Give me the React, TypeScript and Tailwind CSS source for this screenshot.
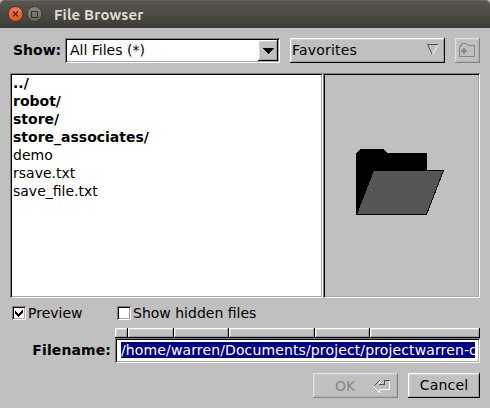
import type { ReactNode } from "react";

const sunken =
  "shadow-[inset_1px_1px_0_#808080,inset_-1px_-1px_0_#fff,inset_2px_2px_0_#000,inset_-2px_-2px_0_#a8a8a8]";
const raised =
  "shadow-[inset_-1px_-1px_0_#000,inset_1px_1px_0_#fff,inset_-2px_-2px_0_#a0a0a0,inset_2px_2px_0_#d4d4d4]";
const raisedOff =
  "shadow-[inset_-1px_-1px_0_#868686,inset_1px_1px_0_#e2e2e2,inset_-2px_-2px_0_#b0b0b0,inset_2px_2px_0_#cacaca]";

const folders = ["../", "robot/", "store/", "store_associates/"];
const files = ["demo", "rsave.txt", "save_file.txt"];

function TitleBar() {
  return (
    <header className="flex h-7 shrink-0 items-center rounded-t-[5px] bg-linear-to-b from-[#59574f] to-[#3d3c37] pl-[7px] shadow-[inset_0_1px_0_#69675e]">
      <svg width="36" height="18" viewBox="0 0 36 18">
        <defs>
          <linearGradient id="close" x1="0" y1="0" x2="0" y2="1">
            <stop offset="0" stopColor="#f37c56" />
            <stop offset="1" stopColor="#e4511f" />
          </linearGradient>
          <linearGradient id="max" x1="0" y1="0" x2="0" y2="1">
            <stop offset="0" stopColor="#89877f" />
            <stop offset="1" stopColor="#65645d" />
          </linearGradient>
        </defs>
        <circle cx="8.5" cy="9" r="7.5" fill="url(#close)" stroke="#37352f" />
        <path d="M6 6.5l5 5M11 6.5l-5 5" stroke="#4d2a1d" strokeWidth="1.4" />
        <circle cx="27.5" cy="9" r="7.5" fill="url(#max)" stroke="#37352f" />
        <rect x="24.5" y="6.5" width="6" height="6" fill="none" stroke="#35342f" />
      </svg>
      <h1 className="ml-[11px] pt-px text-[15px] leading-7 font-bold text-[#dfdbd2] [font-family:Ubuntu,'Noto_Sans',sans-serif] tracking-[0.15px]">
        File Browser
      </h1>
    </header>
  );
}

function Check({ checked, children }: { checked?: boolean; children: ReactNode }) {
  return (
    <label className="flex items-center gap-[2px]">
      <span className={`h-[14px] w-[14px] bg-white ${sunken}`}>
        {checked && (
          <svg width="14" height="14" shapeRendering="crispEdges">
            <path d="M3 5v3l3 3 5-5V3L6 8z" />
          </svg>
        )}
      </span>
      <span className="leading-[18px]">{children}</span>
    </label>
  );
}

export default function App() {
  return (
    <div className="h-[408px] w-[490px] overflow-hidden bg-[#c0c0c0]">
      <div className="flex h-full flex-col text-[14px] whitespace-nowrap text-black [font-family:'DejaVu_Sans',sans-serif]">
        <TitleBar />
        <main className="flex flex-col px-[10px] pt-[10px]">
          <div className="flex h-[25px]">
            <b className="w-[55px] pl-[3px] leading-6">Show:</b>
            <div className={`flex w-[215px] justify-between bg-white p-[2px] ${sunken}`}>
              <span className="pl-[3px] leading-5">All Files (*)</span>
              <span className={`flex w-5 items-center justify-center bg-[#c0c0c0] ${raised}`}>
                <svg width="12" height="6" shapeRendering="crispEdges">
                  <path d="M0 0h12L6 6z" />
                </svg>
              </span>
            </div>
            <div className={`ml-[10px] flex w-[155px] justify-between pr-[6px] pl-[2px] ${raised}`}>
              <span className="leading-6 tracking-[0.2px]">Favorites</span>
              <svg className="mt-[6px]" width="12" height="12" fill="none">
                <path d="M11 .5H.5L5.5 11" stroke="#555" />
                <path d="M10.5 1.5L5.5 11" stroke="#fff" />
              </svg>
            </div>
            <div className={`ml-[10px] flex w-[25px] justify-center pt-[5px] ${raisedOff}`}>
              <svg width="17" height="15" fill="none" stroke="#868686" shapeRendering="crispEdges">
                <path d="M.5 13.5V4.5L3.5.5H6.5L9.5 2.5H15.5V13.5Z" />
                <path d="M2 8h6M5 5v6" strokeWidth="2" />
              </svg>
            </div>
          </div>

          <div className="mt-[10px] flex h-[225px]">
            <ul className={`w-[313px] bg-white pt-px pl-[3px] leading-[18px] ${sunken}`}>
              {folders.map((name) => (
                <li key={name} className="font-bold">
                  {name}
                </li>
              ))}
              {files.map((name) => (
                <li key={name}>{name}</li>
              ))}
            </ul>
            <div className={`flex-1 pt-[75px] pl-[33px] ${sunken}`}>
              <svg width="90" height="68" shapeRendering="crispEdges">
                <path d="M0 67V5L4 1H27L31 5H71V23L50 67Z" />
                <path d="M17.5 22.5H87.5L70.5 66.5H.5Z" fill="#555" stroke="#000" />
              </svg>
            </div>
          </div>

          <div className="mt-[6px] flex h-[18px] pl-[2px]">
            <div className="w-[105px]">
              <Check checked>Preview</Check>
            </div>
            <Check>Show hidden files</Check>
          </div>

          <div className="mt-[6px] flex h-[35px]">
            <b className="w-[105px] pt-[10px] pr-[4px] text-right leading-6 tracking-[0.1px]">Filename:</b>
            <div className="w-[365px]">
              <div className="flex h-[10px]">
                <i className={`w-[13px] ${raised}`} />
                <i className={`w-[46px] ${raised}`} />
                <i className={`w-[55px] ${raised}`} />
                <i className={`w-[86px] ${raised}`} />
                <i className={`w-[55px] ${raised}`} />
                <i className={`w-[110px] ${raised}`} />
              </div>
              <div className={`h-[25px] bg-white pt-1 pr-[5px] pl-[6px] ${sunken}`}>
                <div className="h-4 overflow-hidden bg-[#000080] leading-4 tracking-[0.13px] text-white">
                  /home/warren/Documents/project/projectwarren-c
                </div>
              </div>
            </div>
          </div>

          <div className="mt-[10px] flex h-[25px] justify-end gap-[10px]">
            <div className={`flex w-[85px] items-center justify-between pr-[7px] pl-[22px] text-[#888] ${raisedOff}`}>
              <span className="leading-6">OK</span>
              <svg width="18" height="14" fill="none" shapeRendering="crispEdges">
                <path d="M.5 7.5L6.5 13.5V10.5H16.5V1.5" stroke="#fff" />
                <path d="M.5 7.5L6.5 1.5V5.5H11.5V1.5H16.5" stroke="#555" />
                <path d="M6.5 2V5" stroke="#fff" />
              </svg>
            </div>
            <div className={`w-[72px] text-center leading-6 tracking-[0.2px] ${raised}`}>Cancel</div>
          </div>
        </main>
      </div>
    </div>
  );
}
